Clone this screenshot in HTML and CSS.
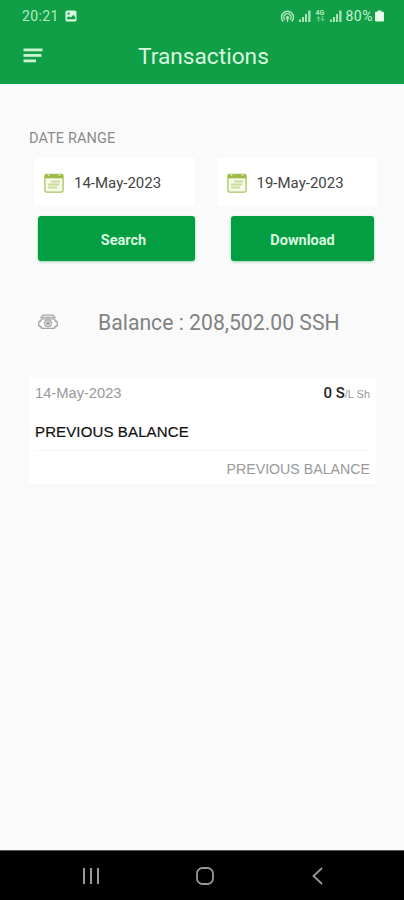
FILE: index.html
```html
<!DOCTYPE html>
<html lang="en">
<head>
  <meta charset="UTF-8" />
  <meta name="viewport" content="width=device-width, initial-scale=1.0"/>
  <title>Transactions</title>
  <link rel="stylesheet" href="styles.css">
</head>
<body>

  <header class="header">
    <div class="status-bar">
      <span class="clock">20:21</span>
      <svg class="icon-image" width="12" height="12" viewBox="0 0 13 13">
        <rect x="0.5" y="0.5" width="12" height="12" rx="2" fill="#d9f7df"/>
        <circle cx="4" cy="4" r="1.2" fill="#109e47"/>
        <path d="M2 10V8.4l2.2-1.6 1.9 1.3L9 5.4l2.2 2.2V10z" fill="#109e47"/>
      </svg>

      <div class="status-icons">
        <svg width="15" height="13" viewBox="0 0 15 13" fill="none" stroke="#b5e9c0" stroke-width="1.4">
          <path d="M3.2 11.5A6 6 0 1 1 11.8 11.5"/>
          <path d="M4.9 9.7A3.6 3.6 0 1 1 10.1 9.7"/>
          <circle cx="7.5" cy="7.6" r="1" fill="#b5e9c0"/>
          <path d="M7.5 8v4"/>
        </svg>
        <svg class="signal" width="12" height="12" viewBox="0 0 12 12" fill="#a9e3b5">
          <path d="M0 9.5h2V12H0zM3 7h2v5H3zM6 4h2v8H6zM9.2 0.5h2.3V12H9.2z"/>
        </svg>
        <div class="network">
          <span>4G</span>
          <svg width="9" height="6" viewBox="0 0 9 6" fill="#6cc985">
            <path d="M2.5 0L5 2.5H3.2V5.5H1.8V2.5H0zM5.8 0h1.4v3H9L6.5 5.5 4.5 3h1.3z"/>
          </svg>
        </div>
        <svg class="signal" width="12" height="12" viewBox="0 0 12 12" fill="#a9e3b5">
          <path d="M0 9.5h2V12H0zM3 7h2v5H3zM6 4h2v8H6zM9.2 0.5h2.3V12H9.2z"/>
        </svg>
        <span class="battery-text">80%</span>
        <svg width="9" height="12" viewBox="0 0 9 12" fill="#e6fbea">
          <path d="M2.5 0.5h4v1.2H8a1 1 0 0 1 1 1V10.5a1 1 0 0 1-1 1H1a1 1 0 0 1-1-1V2.7a1 1 0 0 1 1-1h1.5z"/>
        </svg>
      </div>
    </div>

    <div class="toolbar">
      <svg class="menu-icon" width="20" height="16" viewBox="0 0 20 16" fill="#c9f3d1">
        <rect x="0.5" y="0.5" width="19" height="2.8"/>
        <rect x="0.5" y="6" width="18" height="2.8"/>
        <rect x="0.5" y="11.5" width="12.5" height="2.8"/>
      </svg>
      <h1 class="title">Transactions</h1>
    </div>
  </header>

  <main class="content">
    <div class="section-label">DATE RANGE</div>

    <div class="dates">
      <div class="date-box">
        <svg width="20" height="20" viewBox="0 0 20 20" fill="none">
          <rect x="0.9" y="1.5" width="18.2" height="17.6" rx="1.5" fill="#f6faea" stroke="#a9c45c" stroke-width="1.3"/>
          <path d="M1 1.5h18v3.8H1z" fill="#9dbb45"/>
          <path d="M4.5 0v3M15.5 0v3" stroke="#d9e6ae" stroke-width="1.6"/>
          <path d="M7 8.500h9M4 11.5h11M4 14.5h9" stroke="#cbdc98" stroke-width="1.8"/>
        </svg>
        <span>14-May-2023</span>
      </div>
      <div class="date-box">
        <svg width="20" height="20" viewBox="0 0 20 20" fill="none">
          <rect x="0.9" y="1.5" width="18.2" height="17.6" rx="1.5" fill="#f6faea" stroke="#a9c45c" stroke-width="1.3"/>
          <path d="M1 1.5h18v3.8H1z" fill="#9dbb45"/>
          <path d="M4.5 0v3M15.5 0v3" stroke="#d9e6ae" stroke-width="1.6"/>
          <path d="M7 8.5h9M4 11.5h11M4 14.5h9" stroke="#cbdc98" stroke-width="1.8"/>
        </svg>
        <span>19-May-2023</span>
      </div>
    </div>

    <div class="actions">
      <button class="btn search-btn">Search</button>
      <button class="btn download-btn">Download</button>
    </div>

    <div class="balance">
      <svg width="20" height="16" viewBox="0 0 20 16" fill="none" stroke="#a5a5a5" stroke-width="1.3">
        <path d="M2.5 4.2L5 1.2h10l2.5 3"/>
        <path d="M4 3.3h12" stroke="#b5b5b5"/>
        <path d="M3.500 4.800h13M0.800 7.500v4.500M19.200 7.500v4.500M3.500 14.400h13"/>
        <path d="M0.800 7.500q2.700 0 2.700-2.700M19.200 7.500q-2.700 0-2.700-2.700M0.800 12q2.700 0 2.700 2.400M19.200 12q-2.700 0-2.700 2.400"/>
        <circle cx="10" cy="9.2" r="3.3"/>
        <circle cx="10" cy="9.2" r="1.2" fill="#8a8a8a"/>
      </svg>
      <span>Balance : 208,502.00 SSH</span>
    </div>

    <div class="transaction-card">
      <div class="card-top">
        <span class="card-date">14-May-2023</span>
        <span class="amount">0 S<small>/L Sh</small></span>
      </div>
      <div class="card-title">PREVIOUS BALANCE</div>
      <div class="card-footer">PREVIOUS BALANCE</div>
    </div>
  </main>

  <nav class="nav-bar">
    <svg width="18" height="18" viewBox="0 0 18 18" stroke="#999" stroke-width="2">
      <path d="M2 1v16M9 1v16M16 1v16"/>
    </svg>
    <svg width="18" height="18" viewBox="0 0 18 18" fill="none" stroke="#999" stroke-width="1.8">
      <rect x="1" y="1" width="16" height="16" rx="5.5"/>
    </svg>
    <svg width="18" height="18" viewBox="0 0 18 18" fill="none" stroke="#999" stroke-width="1.8">
      <path d="M13 1L4.5 9l8.5 8"/>
    </svg>
  </nav>

</body>
</html>
```
FILE: styles.css
```css
/* General */
* {
  box-sizing: border-box;
}

body {
  margin: 0;
  height: 900px;
  display: flex;
  flex-direction: column;
  font-family: Roboto, sans-serif;
  background: #fafafa;
  color: #444;
}

svg {
  display: block;
  flex-shrink: 0;
}

/* Header */
.header {
  height: 84px;
  background: #109e47;
}

.status-bar {
  display: flex;
  align-items: center;
  height: 32px;
  padding: 0 20px 0 22px;
}

.clock {
  font-size: 14px;
  letter-spacing: 0.4px;
  color: #b5e9c0;
}

.icon-image {
  margin-left: 6px;
}

.status-icons {
  display: flex;
  align-items: center;
  gap: 4px;
  margin-left: auto;
}

.network {
  width: 11px;
  padding-left: 1px;
  font-size: 7px;
  font-weight: bold;
  line-height: 6px;
  color: #b5e9c0;
}

.battery-text {
  font-size: 14px;
  letter-spacing: 0.5px;
  color: #c9f3d1;
  margin-right: -2px;
}

.toolbar {
  display: flex;
  align-items: center;
  height: 48px;
  padding-left: 23px;
}

.title {
  margin: 0 0 0 95px;
  font-size: 22.7px;
  font-weight: 400;
  color: #d9f7df;
}

/* Main Content */
.content {
  flex: 1;
  padding: 46px 27px 0 29px;
}

.section-label {
  font-size: 14.5px;
  letter-spacing: 0.1px;
  line-height: 18px;
  color: #8a8a8a;
}

.dates {
  display: flex;
  gap: 23px;
  margin: 10px 0 0 6px;
}

.date-box {
  display: flex;
  align-items: center;
  gap: 10px;
  width: 160px;
  height: 48px;
  padding: 2px 0 0 9px;
  background: white;
  font-size: 15px;
}

/* Buttons */
.actions {
  display: flex;
  gap: 36px;
  margin: 10px 0 0 9px;
}

.btn {
  height: 45px;
  padding: 4px 0 0;
  border: none;
  border-radius: 3px;
  background: #049e42;
  box-shadow: 0 1px 3px rgba(4, 158, 66, 0.4);
  color: #d9f7df;
  font-family: inherit;
  font-size: 14.5px;
  font-weight: 700;
}

.search-btn {
  width: 157px;
  padding-left: 14px;
}

.download-btn {
  width: 143px;
}

/* Balance */
.balance {
  display: flex;
  align-items: center;
  gap: 40px;
  height: 30px;
  margin: 46px 0 0 9px;
  font-size: 21.2px;
  color: #828282;
  white-space: nowrap;
}

/* Transaction */
.transaction-card {
  width: 347px;
  height: 107px;
  margin-top: 40px;
  padding: 6px 6px 0;
  background: white;
  font-family: "Liberation Sans", Arial, sans-serif;
}

.card-top {
  display: flex;
  align-items: center;
  justify-content: space-between;
  height: 20px;
}

.card-date {
  font-size: 14.7px;
  color: #999;
}

.amount {
  font-family: Roboto, sans-serif;
  font-size: 15px;
  font-weight: 500;
  color: #222;
}

.amount small {
  font-family: "Liberation Sans", Arial, sans-serif;
  font-size: 11px;
  font-weight: 400;
  color: #999;
}

.card-title {
  height: 48px;
  line-height: 58px;
  font-size: 15px;
  letter-spacing: 0.13px;
  color: #111;
  -webkit-text-stroke: 0.2px #111;
  border-bottom: 1px solid #f7f7f7;
}

.card-footer {
  line-height: 36px;
  font-size: 14.2px;
  text-align: right;
  color: #999;
}

/* Navigation bar */
.nav-bar {
  display: flex;
  align-items: center;
  justify-content: space-between;
  height: 50px;
  padding: 0 77px 0 82px;
  border-top: 1px solid #555;
  background: #000;
}
```
